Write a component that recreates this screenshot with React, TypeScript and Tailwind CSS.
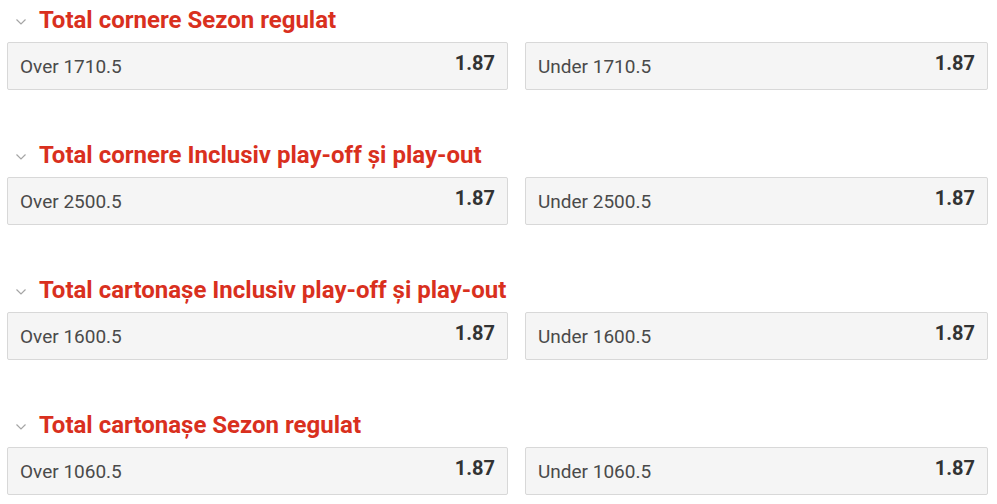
import React from "react";

const sections = [
  { title: "Total cornere Sezon regulat", line: "1710.5" },
  { title: "Total cornere Inclusiv play-off și play-out", line: "2500.5" },
  { title: "Total cartonașe Inclusiv play-off și play-out", line: "1600.5" },
  { title: "Total cartonașe Sezon regulat", line: "1060.5" },
];

function Chevron() {
  return (
    <svg width="12" height="8" viewBox="0 0 12 8" className="mr-[12px] mt-[2px] ml-[1px]">
      <path d="M1.5 1.5 L6 6 L10.5 1.5" fill="none" stroke="#a5a5a5" strokeWidth="1.2" />
    </svg>
  );
}

function Option({ label, odd, w }: { label: string; odd: string; w: string }) {
  return (
    <div
      className={`${w} h-[48px] flex items-center justify-between border border-[#d8d8d8] bg-[#f5f5f5] pl-[12px] pr-[12px] rounded-[2px]`}
    >
      <span className="text-[19px] text-[#4a4a4a] pt-[2px]">{label}</span>
      <span className="text-[20px] font-bold text-[#333333] pb-[6px]">{odd}</span>
    </div>
  );
}

export default function App() {
  return (
    <div
      className="w-[997px] h-[504px] bg-white overflow-hidden pl-[7px]"
      style={{ fontFamily: "Roboto, 'Liberation Sans', sans-serif" }}
    >
      {sections.map((s, i) => (
        <div key={i} className="h-[135px]">
          <div className="h-[41px] flex items-center pl-[7px]">
            <Chevron />
            <span className="text-[24px] font-bold text-[#d9301e] leading-none pb-[2px]">{s.title}</span>
          </div>
          <div className="flex gap-[17px] mt-[1px]">
            <Option label={`Over ${s.line}`} odd="1.87" w="w-[501px]" />
            <Option label={`Under ${s.line}`} odd="1.87" w="w-[463px]" />
          </div>
        </div>
      ))}
    </div>
  );
}
